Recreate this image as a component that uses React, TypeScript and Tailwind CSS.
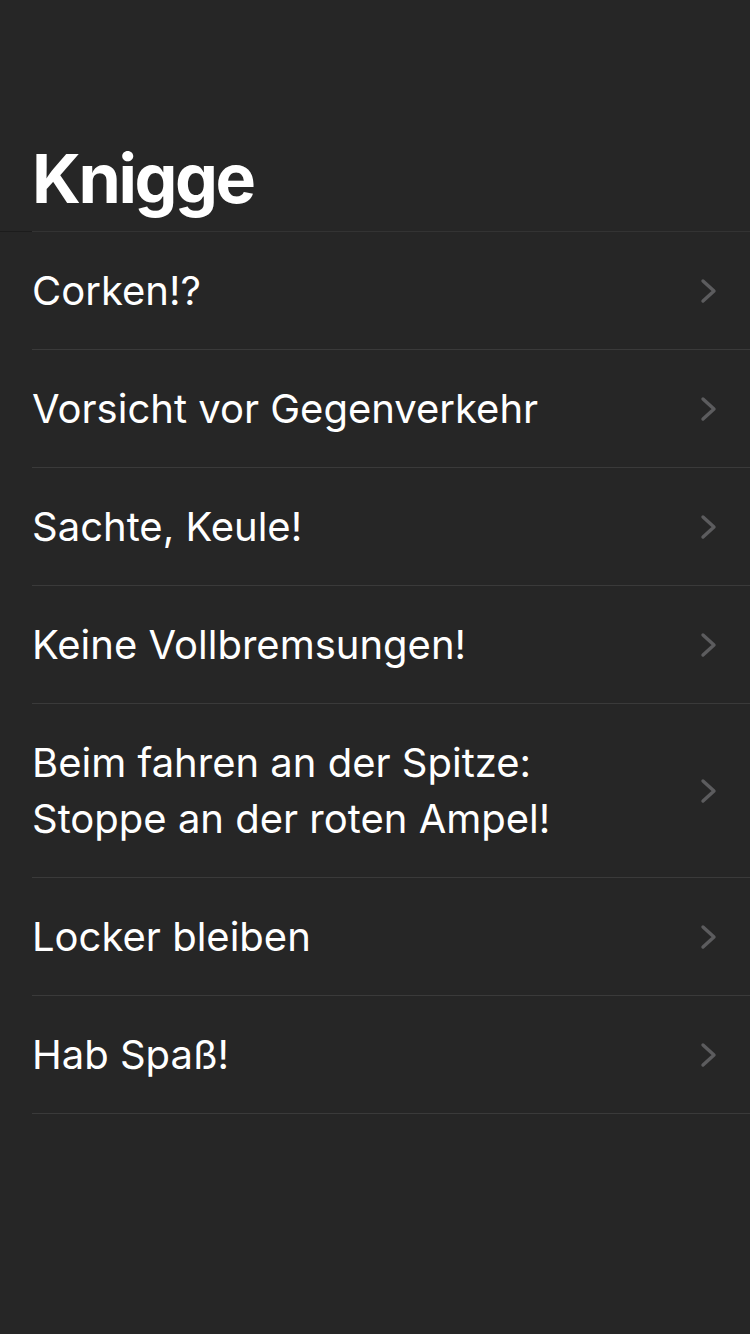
const items = [
  "Corken!?",
  "Vorsicht vor Gegenverkehr",
  "Sachte, Keule!",
  "Keine Vollbremsungen!",
  "Beim fahren an der Spitze: Stoppe an der roten Ampel!",
  "Locker bleiben",
  "Hab Spaß!",
];

function Chevron() {
  return (
    <svg width="18" height="26" viewBox="0 0 18 26" className="shrink-0">
      <path d="M3 3 L14 13 L3 23" fill="none" stroke="#5c5c5e" strokeWidth="3.4" strokeLinecap="round" strokeLinejoin="round" />
    </svg>
  );
}

export default function App() {
  return (
    <div className="w-[750px] h-[1334px] bg-[#262626] text-white overflow-hidden" style={{ fontFamily: "Inter, 'Noto Sans', sans-serif" }}>
      <div className="pt-[137px] px-8 h-[231px]">
        <h1 className="text-[68px] font-bold leading-[82px] tracking-[-2.4px]">Knigge</h1>
      </div>
      <div className="flex h-px">
        <div className="w-8 bg-[#1c1c1c]" />
        <div className="flex-1 bg-[#333333]" />
      </div>
      <ul className="pl-8">
        {items.map((t) => (
          <li key={t} className="flex items-center justify-between border-b border-[#3a3a3a] pr-8 pt-[31px] pb-[30px]">
            <span className="text-[40px] leading-[56px] max-w-[560px]">{t}</span>
            <Chevron />
          </li>
        ))}
      </ul>
    </div>
  );
}
